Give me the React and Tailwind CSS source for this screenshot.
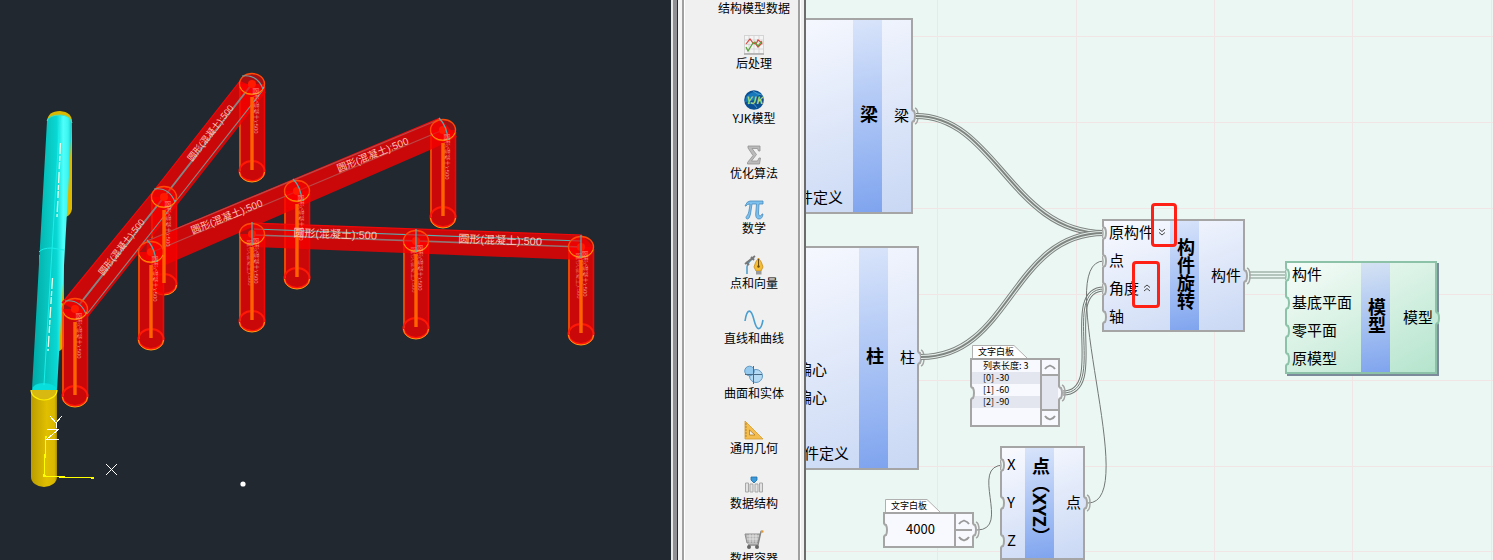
import React from "react";

/* ---------- 3D model view ---------- */

const COLUMNS = [
  { x: 252, y: 84, thin: true },
  { x: 164, y: 197, thin: true },
  { x: 443, y: 130 },
  { x: 297, y: 191 },
  { x: 75, y: 309, thin: true },
  { x: 151, y: 252 },
  { x: 252, y: 234, twin: true },
  { x: 416, y: 241, twin: true },
  { x: 581, y: 247, twin: true },
];

const BEAM_LABELS = [
  { x: 213, y: 135, angle: -52, size: 9 },
  { x: 124, y: 249, angle: -52, size: 9 },
  { x: 374, y: 158, angle: -22, size: 10 },
  { x: 228, y: 220, angle: -22, size: 10 },
  { x: 335, y: 238, angle: 2, size: 11 },
  { x: 500, y: 244, angle: 2, size: 11 },
];

function Column({ x, y }) {
  return (
    <g>
      <path
        d={`M${x - 13} ${y}V${y + 87}A13 10.5 0 0 0 ${x + 13} ${y + 87}V${y}Z`}
        fill="#f60000"
        fillOpacity="0.8"
      />
      <path d={`M${x - 12} ${y + 2}V${y + 87}`} stroke="#ff8a00" strokeWidth="1" />
      <path d={`M${x + 12.5} ${y + 2}V${y + 87}`} stroke="#f00808" strokeWidth="1.5" />
      <ellipse cx={x} cy={y + 87} rx="12.5" ry="10" fill="none" stroke="#ff1808" strokeWidth="2" />
      <path
        d={`M${x - 12.5} ${y + 88}A12.5 10 0 0 0 ${x + 12.5} ${y + 88}`}
        fill="none"
        stroke="#ff9a10"
        strokeWidth="1"
      />
    </g>
  );
}

function ColumnDetail({ x, y, thin, twin }) {
  return (
    <g>
      <ellipse cx={x} cy={y} rx="12.5" ry="10.5" fill="#ff0000" fillOpacity="0.6" />
      <circle cx={x} cy={y} r="4" fill="#ff1a00" />
      <ellipse cx={x} cy={y} rx="12.5" ry="10.5" fill="none" stroke="#ff4a08" strokeWidth="1.4" />
      <path
        d={`M${x - 12} ${y + 3}A12.5 10 0 0 0 ${x + 12} ${y + 3}`}
        fill="none"
        stroke="#ff9000"
        strokeWidth="1"
      />
      <text
        transform={`translate(${x + 2} ${y + 4}) rotate(90)`}
        fontSize="6"
        fill="#ffb0a0"
        fillOpacity="0.8"
      >
        圆形(混凝土):500
      </text>
      {twin && (
        <text
          transform={`translate(${x - 4} ${y + 6}) rotate(90)`}
          fontSize="6"
          fill="#ffb0a0"
          fillOpacity="0.6"
        >
          圆形(混凝土):500
        </text>
      )}
      <path d={`M${x} ${y + 13}V${y + 86}`} stroke="#ff6200" strokeWidth="3.4" />
      {thin ? (
        <path
          d={`M${x - 10} ${y - 8}Q${x + 5} ${y - 10} ${x + 11} ${y + 5}`}
          fill="none"
          stroke="#6f9fa0"
          strokeWidth="1.2"
        />
      ) : twin ? (
        <path d={`M${x} ${y - 12}V${y + 11}`} stroke="#3fb8bd" strokeWidth="1.2" />
      ) : (
        <path
          d={`M${x - 4} ${y - 12}Q${x + 4} ${y - 4} ${x + 5} ${y + 10}`}
          fill="none"
          stroke="#55a8ab"
          strokeWidth="1.3"
        />
      )}
    </g>
  );
}

function ModelView() {
  return (
    <section aria-label="三维视图" className="overflow-hidden bg-[#212830]">
      <svg
        viewBox="0 0 671 560"
        preserveAspectRatio="xMinYMin meet"
        className="w-full font-['Liberation_Sans','Noto_Sans_CJK_SC',sans-serif]"
      >
        <defs>
          <linearGradient id="cyan" x1="0" x2="1">
            <stop offset="0" stopColor="#00a9a5" />
            <stop offset="0.45" stopColor="#09cac5" />
            <stop offset="0.62" stopColor="#08d8d4" />
            <stop offset="0.78" stopColor="#4ffffa" />
            <stop offset="0.9" stopColor="#3cf5f0" />
            <stop offset="1" stopColor="#12c4c0" />
          </linearGradient>
          <linearGradient id="gold" x1="0" x2="1">
            <stop offset="0" stopColor="#b99b00" />
            <stop offset="0.2" stopColor="#c7a800" />
            <stop offset="0.6" stopColor="#e0be00" />
            <stop offset="0.9" stopColor="#d9b800" />
            <stop offset="1" stopColor="#a88e00" />
          </linearGradient>
        </defs>

        {/* supports behind the main cylinder */}
        <path d="M47 121Q48 111 60 111Q72 112 72 122V209Q71 215 66 217H50Z" fill="#dcb800" />
        <path d="M39 255H64V346Q62 351 56 352L40 300Z" fill="#d3b000" />
        <path d="M31 390V477A13 10 0 0 0 57 477V390Z" fill="url(#gold)" />
        <path d="M31 390A13 10 0 0 0 57 390Z" fill="#d8b912" />
        <path d="M31 390A13 10 0 0 0 57 390" fill="none" stroke="#fff000" strokeWidth="1.2" />
        <path d="M47 121Q48 115 60 115Q71 115 72 123L57 390Q44 380 32 389Z" fill="url(#cyan)" />
        <path d="M32 390Q33 383 44 383Q56 384 57 390Z" fill="#08dfdc" />
        <path d="M47 121Q49 115 60 115Q70 115 72 123" fill="none" stroke="#55ddb0" />
        <path d="M39 252Q42 248 52 248L64 250M60 115L44 385" fill="none" stroke="#19eee9" />
        <path d="M60.500 143L57 217M52.500 278L48 351" stroke="#e9ffe6" strokeWidth="1.3" strokeDasharray="11 2 5 1 7 3" />

        {COLUMNS.map((c) => (
          <Column key={`${c.x}-${c.y}`} {...c} />
        ))}

        {/* beams */}
        <g fill="#f60000" fillOpacity="0.8">
          <path d="M240 81L266 92L178 204L88 317L62 303L152 193Z" />
          <path d="M147 241L440 118L457 137L430 150L163 266L146 259Z" />
          <path d="M252 223L582 235L593 246L582 260L252 247Z" />
        </g>
        <g fill="none" strokeWidth="1.2">
          <path d="M240 81L152 193L62 303M147 241L440 118M253 223L582 235" stroke="#ef0a0a" />
          <path d="M252 84L164 197L79 305" stroke="#858585" strokeWidth="2" />
          <path d="M263 90L176 201L87 314" stroke="#908080" />
          <path d="M147 241L438 120M155 251L443 130" stroke="#b84848" />
          <path d="M254 229L581 241" stroke="#5caaad" />
          <path d="M254 235L581 247" stroke="#927575" strokeWidth="1.6" />
        </g>

        {COLUMNS.map((c) => (
          <ColumnDetail key={`${c.x}-${c.y}`} {...c} />
        ))}

        {BEAM_LABELS.map((b) => (
          <text
            key={`${b.x}-${b.y}`}
            transform={`translate(${b.x} ${b.y}) rotate(${b.angle})`}
            textAnchor="middle"
            fontSize={b.size}
            fill="#ffc4b8"
          >
            圆形(混凝土):500
          </text>
        ))}

        {/* axis marker */}
        <g fill="none" shapeRendering="crispEdges">
          <path d="M46 436L44 476L61 477L94 478" stroke="#ffff00" strokeWidth="1.2" />
          <path d="M50 416L56 423L62 416M56 423V428M47 429H59L47 439H59M106 464L117 475M117 464L106 475" stroke="#fff" />
        </g>
        <circle cx="243" cy="484" r="2.600" fill="#fff" />
      </svg>
    </section>
  );
}

/* ---------- tool palette ---------- */

const ICONS = {
  chart: (
    <>
      <rect x="0.500" y="0.500" width="19" height="18" fill="#f4f4f4" stroke="#d4d4d4" />
      <path d="M5 1V18M10 1V18M15 1V18M1 5H19M1 9.500H19M1 14H19" stroke="#ccc" strokeWidth="0.700" />
      <path d="M2 9L6 4L9 8L12 9L14 5L18 8L14 12L11 8" fill="none" stroke="#d5473e" strokeWidth="1.200" />
      <path d="M2 12L4 16L9 8L11 7L14 11L18 6" fill="none" stroke="#56a136" strokeWidth="1.200" />
      <path d="M0 19H20" stroke="#aaa" strokeWidth="1.500" />
    </>
  ),
  globe: (
    <>
      <circle cx="10" cy="10" r="9.800" fill="#0a4f93" />
      <path d="M2 7Q9 -1 17 4Q12 7 10 10Q6 12 1 12Z" fill="#1778bb" />
      <path d="M4 14Q9 11 13 18M9 1Q14 5 18 5" fill="none" stroke="#58a5d2" strokeWidth="0.800" />
      <text x="10" y="13.500" textAnchor="middle" fontSize="10" fontWeight="700" fontStyle="italic" fill="#a8d77a">YJK</text>
    </>
  ),
  sigma: (
    <path d="M4 1H16V6H14.500L13.500 3.500H8L12.500 9.500L7.500 16H13.500L15 13H16.500L15.500 19H3.500V17.500L9 10.500L4 3Z" fill="#bababa" stroke="#929292" strokeWidth="0.800" />
  ),
  pi: (
    <path d="M1 6Q3 1 6 1H19V4H15L14.500 13Q14.500 16 16 16Q17.500 16 18 14H19Q18.500 19 15 19Q11.500 19 11.700 14L12.500 4H8L6.500 14Q5.500 19 3.500 19Q2 19 2 17.500Q2 16.500 3.500 15Q5 13 6 4Q3 4 2 6Z" fill="#7cc0ee" stroke="#4a8cbc" strokeWidth="0.800" />
  ),
  pen: (
    <>
      <path d="M3 19V12Q4 6 10 3" fill="none" stroke="#4a9bc8" strokeWidth="1.500" />
      <path d="M1 9L11 1M2 7L5 10M7 2L10 5" stroke="#777" strokeWidth="1.800" />
      <path d="M14.500 3Q18 7 19 12L17 16H12L10 12Q11 7 14.500 3Z" fill="#f5bd35" stroke="#c58a19" strokeWidth="0.800" />
      <path d="M14.500 4V11" stroke="#6a4b14" />
      <circle cx="14.500" cy="11.500" r="1.200" fill="#6a4b14" />
      <rect x="12" y="16" width="5.500" height="3.500" fill="#999" />
    </>
  ),
  sine: (
    <path d="M1 11C3 -2 7 -2 10 10S17 21 19 10" fill="none" stroke="#4b9fd0" strokeWidth="1.600" />
  ),
  blob: (
    <>
      <ellipse cx="12" cy="11" rx="6.500" ry="6.500" fill="#b5daf4" stroke="#6299c2" />
      <circle cx="5.500" cy="6" r="4.800" fill="#96c9ee" stroke="#6299c2" />
      <path d="M9.500 1V19M1 9.500H18" stroke="#496d89" />
    </>
  ),
  setSquare: (
    <>
      <path d="M1 1V19H19Z" fill="#f4bd50" stroke="#d79a2c" strokeWidth="0.800" />
      <path d="M5.500 10V15H11Z" fill="#f0f0f0" stroke="#b57b16" strokeWidth="0.800" />
      <path d="M1 4H3M1 7H3M1 10H3M1 13H3M1 16H3" stroke="#a4700f" strokeWidth="0.700" />
    </>
  ),
  struct: (
    <>
      <path d="M1.500 8V17H4.500V8ZM6 9V17H9V9ZM11 9V17H14V9ZM15.500 8V17H18.500V8Z" fill="#e2e2e2" stroke="#a8a8a8" />
      <path d="M7 2H13V5L10 8L7 5Z" fill="#3d9ada" stroke="#1d6ca6" strokeWidth="0.800" />
    </>
  ),
  cart: (
    <>
      <path d="M1 4H16L14 13H3Z" fill="#b5b5b5" stroke="#8c8c8c" />
      <path d="M3 6H15M3 9H14.500M6 4V13M9 4V13M12 4V13" stroke="#eee" strokeWidth="0.700" />
      <path d="M19 1.500H17L14 15H4" fill="none" stroke="#858585" strokeWidth="1.300" />
      <circle cx="5" cy="17" r="2" fill="#666" />
      <circle cx="13" cy="17" r="2" fill="#666" />
      <path d="M17 1.500H19.500" stroke="#e79a30" strokeWidth="2" />
    </>
  ),
};

const TOOLS = [
  { label: "结构模型数据" },
  { label: "后处理", icon: "chart" },
  { label: "YJK模型", icon: "globe" },
  { label: "优化算法", icon: "sigma" },
  { label: "数学", icon: "pi" },
  { label: "点和向量", icon: "pen" },
  { label: "直线和曲线", icon: "sine" },
  { label: "曲面和实体", icon: "blob" },
  { label: "通用几何", icon: "setSquare" },
  { label: "数据结构", icon: "struct" },
  { label: "数据容器", icon: "cart" },
];

function Palette() {
  return (
    <aside className="flex overflow-hidden border-r-2 border-[#6c6c6c] bg-[#f0f0f0]">
      <div className="w-0.5 bg-[#e8e8e8]" />
      <div className="w-1 bg-[#8f8f94]" />
      <div className="w-px bg-[#2c2c30]" />
      <div className="w-1 bg-[#f4f4f4]" />
      <nav className="flex flex-1 flex-col items-center gap-[19px] border-x-2 border-[#a0a0a0] pl-[26px] shadow-[inset_1px_0_0_#fff,1px_0_0_#fff]">
        {TOOLS.map(({ label, icon }) => (
          <button key={label} type="button" className="flex shrink-0 flex-col items-center text-xs/4 whitespace-nowrap text-black">
            {icon && (
              <svg viewBox="0 0 20 20" className="size-5" aria-hidden="true">
                {ICONS[icon]}
              </svg>
            )}
            {label}
          </button>
        ))}
      </nav>
      <div className="w-1" />
    </aside>
  );
}

/* ---------- node canvas ---------- */

function Port({ side, stroke = "#a5a5a5", fill = "#ebf7f3", linked }) {
  const place = side === "in" ? "left-0" : "-right-[7px]";
  return (
    <svg viewBox="0 0 9 18" className={`absolute top-1/2 h-[18px] w-[9px] -translate-y-1/2 ${place}`} aria-hidden="true">
      <path d="M0 2Q1 4 3 4Q4 5 4 9T3 14Q1 14 0 16Z" fill={fill} />
      <path d="M1 1Q1 4 3 4Q4 6 4 9T3 14Q1 14 1 17" fill="none" stroke={stroke} strokeWidth="2" />
      {linked && side === "in" && <path d="M0 4Q2 9 0 14" fill="none" stroke={stroke} strokeWidth="1.500" />}
      {linked && side === "out" && <path d="M4 1Q7 2 7 9T4 17" fill="none" stroke={stroke} strokeWidth="1.500" />}
    </svg>
  );
}

const THEMES = {
  blue: {
    body: "bg-linear-160 from-[#fafbff] to-[#c8d7f4]",
    band: "bg-linear-170 from-[#dae5fa] to-[#7ea3ee]",
    border: "border-[#a5a5a5]",
    stroke: "#a5a5a5",
    out: "#d9e4f8",
    shadow: "",
  },
  green: {
    body: "bg-linear-150 from-[#f8fdfa] to-[#b3e4cc]",
    band: "bg-linear-170 from-[#d7e4f3] to-[#7ea3ee]",
    border: "border-[#8cc3a8]",
    stroke: "#8cc3a8",
    out: "#c7ebd9",
    shadow: "shadow-[2px_2px_0_#7b8b9b]",
  },
};

function Node({ title, inputs, output, place, theme = "blue", row = "h-7", outWidth = "w-[31px]", outLinked = true, clipped = false }) {
  const t = THEMES[theme];
  const listStyle = clipped ? "items-end justify-end pr-2.5 pb-[3px]" : "";
  const rowStyle = clipped ? "" : "pb-0.5 pl-[7px]";
  return (
    <article className={`absolute flex text-[15px] leading-5 text-black ${place} ${t.body} ${t.shadow}`}>
      <div className={`pointer-events-none absolute inset-0 border-2 ${t.border}`} />
      <ul className={`flex flex-1 flex-col ${listStyle}`}>
        {inputs.map(({ label, linked, toggle, indent = "" }, i) => (
          <li key={i} className={`relative flex shrink-0 items-center gap-0.5 whitespace-nowrap ${row} ${rowStyle} ${indent}`}>
            {!clipped && <Port side="in" stroke={t.stroke} linked={linked} />}
            {label}
            {toggle && (
              <button type="button" aria-label={toggle === "down" ? "展开" : "收起"} className="flex size-3 items-center justify-center">
                <svg viewBox="0 0 8 8" className="size-2" fill="none" stroke="#444">
                  <path d={toggle === "down" ? "M1 1L4 3.500L7 1M1 4.500L4 7L7 4.500" : "M1 3.500L4 1L7 3.500M1 7L4 4.500L7 7"} />
                </svg>
              </button>
            )}
          </li>
        ))}
      </ul>
      <h2 className={`flex w-[29px] items-center justify-center pb-1 font-['Noto_Sans','Noto_Sans_CJK_SC',sans-serif] text-lg/[29px] font-bold whitespace-nowrap ${t.band} [writing-mode:vertical-rl]`}>
        {title}
      </h2>
      <div className={`relative flex items-center justify-end pr-1 pb-0.5 ${outWidth}`}>
        {output}
        <Port side="out" stroke={t.stroke} fill={t.out} linked={outLinked} />
      </div>
    </article>
  );
}

function Chevron({ up }) {
  return (
    <svg viewBox="0 0 12 6" className="h-1.5 w-3" fill="none" stroke="#999" strokeWidth="1.800" aria-hidden="true">
      <path d={up ? "M1 5Q2 3 6 1.500Q10 3 11 5" : "M1 1Q2 3 6 4.500Q10 3 11 1"} />
    </svg>
  );
}

function Board({ place, height, children }) {
  return (
    <article className={`absolute ${place}`}>
      <header className="relative ml-0.5 h-[13px] w-14 pl-1.5 text-[9px]/[13px] text-black">
        <svg viewBox="0 0 56 13" className="absolute inset-0 h-[13px] w-14" aria-hidden="true">
          <path d="M0.500 13V0.500H42L55 13" fill="#fff" stroke="#b0b0b0" />
        </svg>
        <span className="relative">文字白板</span>
      </header>
      <div className={`relative flex border-2 border-[#a5a5a5] bg-[#f8f9fe] ${height}`}>
        {children}
        <div className="absolute top-1/2 -left-0.5">
          <Port side="in" />
        </div>
        <div className="absolute top-1/2 -right-0.5">
          <Port side="out" fill="#f8f9fe" linked />
        </div>
      </div>
    </article>
  );
}

function Wires() {
  const beams = [
    "M110 116C190 116 205 233 298 233",
    "M115 357C205 357 205 233 298 233",
  ];
  const angle = "M257 393C302 393 254 289 298 289";
  return (
    <svg width="687" height="560" className="absolute inset-0" fill="none" aria-hidden="true">
      {beams.map((d) => (
        <g key={d}>
          <path d={d} stroke="#7e8480" strokeWidth="6" />
          <path d={d} stroke="#e3ece8" strokeWidth="4" />
          <path d={d} stroke="#7e8480" strokeWidth="2" />
        </g>
      ))}
      <path d={angle} stroke="#737875" strokeWidth="5" />
      <path d={angle} stroke="#ebf7f3" strokeWidth="3" />
      <path d={angle} stroke="#737875" strokeWidth="1" />
      <path d="M282 503C337 503 244 261 298 261M171 530C206 530 162 465 198 465" stroke="#737875" />
      <path d="M443 272H480M443 275H480M443 278H480" stroke="#a3b5ac" strokeWidth="1.500" />
    </svg>
  );
}

const LIST_ROWS = ["列表长度: 3", "[0] -30", "[1] -60", "[2] -90"];

function GridLines() {
  return (
    <svg width="100%" height="100%" className="absolute inset-0" stroke="#f2e5e5" strokeWidth="1" shapeRendering="crispEdges" aria-hidden="true">
      {[131, 270, 408, 546, 685].map((x) => (
        <line key={x} x1={x} x2={x} y1="0" y2="100%" />
      ))}
      {[36, 122, 208, 294, 380, 466, 551].map((y) => (
        <line key={y} x1="0" x2="100%" y1={y} y2={y} />
      ))}
    </svg>
  );
}

function Canvas() {
  return (
    <main className="relative overflow-hidden bg-[#ebf7f3]">
      <GridLines />
      <Node
        title="梁"
        output="梁"
        clipped
        inputs={[{ label: "件定义" }]}
        place="top-[18px] -left-[63px] h-[196px] w-[170px]"
      />
      <Node
        title="柱"
        output="柱"
        clipped
        inputs={[
          { label: "偏心", indent: "mr-[22px]" },
          { label: "偏心", indent: "mr-[22px] mb-7" },
          { label: "件定义" },
        ]}
        place="top-[246px] -left-[63px] h-[224px] w-[176px]"
      />
      <Wires />
      <Node
        title="构件旋转"
        output="构件"
        inputs={[
          { label: "原构件", linked: true, toggle: "down" },
          { label: "点", linked: true },
          { label: "角度", linked: true, toggle: "up" },
          { label: "轴" },
        ]}
        outWidth="w-[46px]"
        place="top-[219px] left-[296px] h-[113px] w-[143px]"
      />
      <Node
        title="模型"
        output="模型"
        theme="green"
        outLinked={false}
        inputs={[{ label: "构件", linked: true }, { label: "基底平面" }, { label: "零平面" }, { label: "原模型" }]}
        outWidth="w-[47px]"
        place="top-[261px] left-[479px] h-[113px] w-[152px]"
      />
      <Node
        title="点（XYZ）"
        output="点"
        row="h-[38px]"
        inputs={[{ label: "X", linked: true }, { label: "Y" }, { label: "Z" }]}
        place="top-[446px] left-[194px] h-[114px] w-[85px]"
      />

      <Board place="top-[345px] left-[164px] w-[90px]" height="h-[69px]">
        <ul className="flex-1 text-[9px]/3 whitespace-nowrap text-black">
          {LIST_ROWS.map((row, i) => (
            <li key={row} className={`pl-[11px] ${i % 2 ? "bg-[#e3e6ee]" : ""}`}>
              {row}
            </li>
          ))}
        </ul>
        <div className="flex w-[18px] flex-col border-l-2 border-[#a5a5a5]">
          <button type="button" aria-label="向上滚动" className="flex h-4 items-center justify-center border-b-2 border-[#a5a5a5]">
            <Chevron up />
          </button>
          <div className="flex-1 bg-[#e3e6ee]" />
          <button type="button" aria-label="向下滚动" className="flex h-4 items-center justify-center border-t-2 border-[#a5a5a5]">
            <Chevron />
          </button>
        </div>
      </Board>

      <Board place="top-[499px] left-[77px] w-[91px]" height="h-9">
        <input aria-label="文字白板数值" defaultValue="4000" className="min-w-0 flex-1 bg-transparent pb-0.5 pl-0.5 text-center text-[13px] text-black outline-none" />
        <div className="flex w-[18px] flex-col border-l-2 border-[#a5a5a5]">
          <button type="button" aria-label="增加" className="flex flex-1 items-center justify-center border-b-2 border-[#a5a5a5]">
            <Chevron up />
          </button>
          <button type="button" aria-label="减少" className="flex flex-1 items-center justify-center">
            <Chevron />
          </button>
        </div>
      </Board>

      <div className="pointer-events-none absolute top-[203px] left-[345px] h-11 w-[26px] rounded border-[3px] border-[#ff2015]" />
      <div className="pointer-events-none absolute top-[261px] left-[326px] h-[47px] w-7 rounded border-[3px] border-[#ff2015]" />
    </main>
  );
}

export default function App() {
  return (
    <div className="grid h-screen grid-cols-[minmax(0,671fr)_135px_minmax(0,687fr)] overflow-hidden bg-[#212830] font-['Noto_Sans_CJK_SC',sans-serif]">
      <ModelView />
      <Palette />
      <Canvas />
    </div>
  );
}
